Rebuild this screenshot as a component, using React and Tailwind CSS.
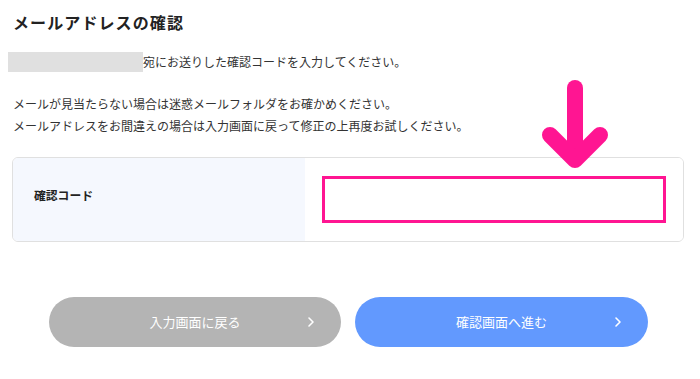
export default function App() {
  return (
    <div
      className="relative w-[700px] h-[379px] bg-white text-[#333] overflow-hidden"
      style={{ fontFamily: '"Noto Sans CJK JP", "Noto Sans", sans-serif' }}
    >
      <h1 className="pt-[12px] pl-[13px] text-[16px] leading-[21px] font-bold tracking-[1.1px] text-[#222]">
        メールアドレスの確認
      </h1>

      <div className="mt-[19px] flex items-center h-[20px] pl-[8px] text-[12px]">
        <span className="block w-[135px] h-[20px] bg-[#e0e0e0]" />
        <span>宛にお送りした確認コードを入力してください。</span>
      </div>

      <div className="mt-[21px] pl-[13px] text-[12px] leading-[22px]">
        <p>メールが見当たらない場合は迷惑メールフォルダをお確かめください。</p>
        <p>メールアドレスをお間違えの場合は入力画面に戻って修正の上再度お試しください。</p>
      </div>

      <div className="mt-[20px] ml-[12px] w-[672px] h-[85px] flex border border-[#e0e0e0] rounded-[6px] overflow-hidden">
        <div className="w-[292px] bg-[#f5f8fe] flex items-center pl-[21px] pb-[9px] text-[11.8px] font-bold text-[#222]">
          確認コード
        </div>
        <div className="flex-1 bg-white flex items-center pl-[17px] pr-[17px]">
          <div className="w-full h-[47px] border-[3px] border-[#ff1592] bg-white" />
        </div>
      </div>

      <div className="mt-[55px] pl-[49px] flex gap-[14px]">
        <button className="relative w-[292px] h-[50px] rounded-full bg-[#b4b4b4] text-white text-[13px] flex items-center justify-center">
          入力画面に戻る
          <svg className="absolute right-[26px] top-1/2 -translate-y-1/2" width="8" height="11" viewBox="0 0 8 11" fill="none">
            <path d="M2 1.5 L6 5.5 L2 9.5" stroke="white" strokeWidth="1.6" strokeLinecap="round" strokeLinejoin="round" />
          </svg>
        </button>
        <button className="relative w-[293px] h-[50px] rounded-full bg-[#6299fe] text-white text-[13px] flex items-center justify-center">
          確認画面へ進む
          <svg className="absolute right-[26px] top-1/2 -translate-y-1/2" width="8" height="11" viewBox="0 0 8 11" fill="none">
            <path d="M2 1.5 L6 5.5 L2 9.5" stroke="white" strokeWidth="1.6" strokeLinecap="round" strokeLinejoin="round" />
          </svg>
        </button>
      </div>

      <svg className="absolute left-[530px] top-[70px]" width="90" height="110" viewBox="530 70 90 110" fill="none">
        <path d="M575 88 L575 158" stroke="#ff1592" strokeWidth="16" strokeLinecap="round" />
        <path d="M550 135 L575 160 L600 135" stroke="#ff1592" strokeWidth="16" strokeLinecap="round" strokeLinejoin="round" />
      </svg>
    </div>
  );
}
